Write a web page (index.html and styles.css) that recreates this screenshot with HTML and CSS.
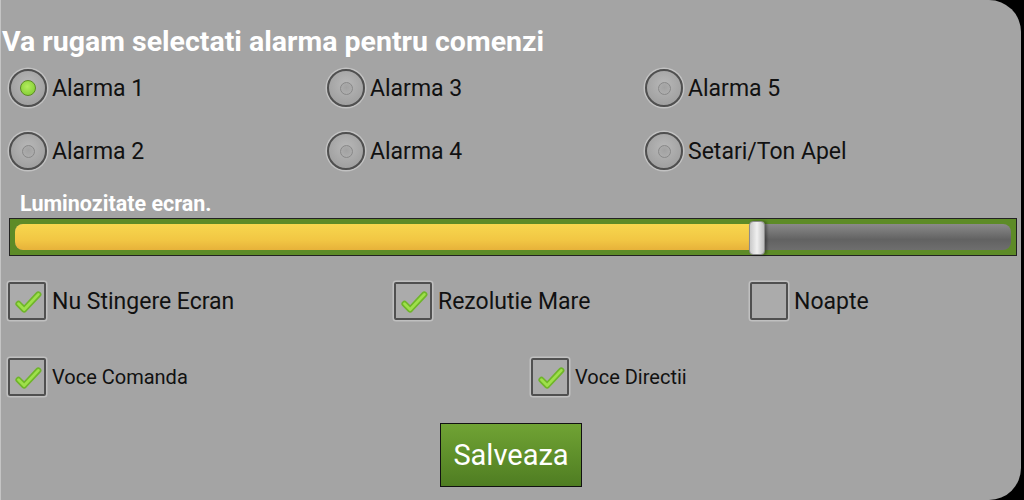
FILE: index.html
```html
<!DOCTYPE html>
<html>
<head>
<meta charset="utf-8">
<link rel="stylesheet" href="styles.css">
</head>
<body>
<div class="panel">
  <h1 class="title">Va rugam selectati alarma pentru comenzi</h1>
  <div class="radios">
    <div class="opt"><span class="radio on"><span class="dot"></span></span><span class="lbl">Alarma 1</span></div>
    <div class="opt"><span class="radio"><span class="dot"></span></span><span class="lbl">Alarma 3</span></div>
    <div class="opt"><span class="radio"><span class="dot"></span></span><span class="lbl">Alarma 5</span></div>
    <div class="opt"><span class="radio"><span class="dot"></span></span><span class="lbl">Alarma 2</span></div>
    <div class="opt"><span class="radio"><span class="dot"></span></span><span class="lbl">Alarma 4</span></div>
    <div class="opt"><span class="radio"><span class="dot"></span></span><span class="lbl">Setari/Ton Apel</span></div>
  </div>
  <div class="bright">Luminozitate ecran.</div>
  <div class="slider">
    <div class="track">
      <div class="fill" style="width:736px"></div>
      <div class="thumb"></div>
    </div>
  </div>
  <div class="checks row1">
    <div class="chk"><span class="box"><svg viewBox="0 0 36 36" width="36" height="36"><path d="M9 21 L15 27 L30 11" fill="none" stroke="#6fb52a" stroke-width="6.5" stroke-linecap="round" stroke-linejoin="round"/><path d="M9 21 L15 27 L30 11" fill="none" stroke="#9ee04a" stroke-width="3" stroke-linecap="round" stroke-linejoin="round"/></svg></span><span class="clbl">Nu Stingere Ecran</span></div>
    <div class="chk"><span class="box"><svg viewBox="0 0 36 36" width="36" height="36"><path d="M9 21 L15 27 L30 11" fill="none" stroke="#6fb52a" stroke-width="6.5" stroke-linecap="round" stroke-linejoin="round"/><path d="M9 21 L15 27 L30 11" fill="none" stroke="#9ee04a" stroke-width="3" stroke-linecap="round" stroke-linejoin="round"/></svg></span><span class="clbl">Rezolutie Mare</span></div>
    <div class="chk"><span class="box"></span><span class="clbl">Noapte</span></div>
  </div>
  <div class="checks row2">
    <div class="chk"><span class="box"><svg viewBox="0 0 36 36" width="36" height="36"><path d="M9 21 L15 27 L30 11" fill="none" stroke="#6fb52a" stroke-width="6.5" stroke-linecap="round" stroke-linejoin="round"/><path d="M9 21 L15 27 L30 11" fill="none" stroke="#9ee04a" stroke-width="3" stroke-linecap="round" stroke-linejoin="round"/></svg></span><span class="clbl small">Voce Comanda</span></div>
    <div class="chk"><span class="box"><svg viewBox="0 0 36 36" width="36" height="36"><path d="M9 21 L15 27 L30 11" fill="none" stroke="#6fb52a" stroke-width="6.5" stroke-linecap="round" stroke-linejoin="round"/><path d="M9 21 L15 27 L30 11" fill="none" stroke="#9ee04a" stroke-width="3" stroke-linecap="round" stroke-linejoin="round"/></svg></span><span class="clbl small">Voce Directii</span></div>
  </div>
  <div class="btnrow"><button class="save">Salveaza</button></div>
</div>
</body>
</html>
```
FILE: styles.css
```css
html, body {
  margin: 0;
  padding: 0;
  background: #000;
}
body {
  width: 1024px;
  height: 500px;
  overflow: hidden;
  font-family: Roboto, "Liberation Sans", sans-serif;
}
.panel {
  width: 1021px;
  height: 500px;
  box-sizing: border-box;
  background: #a4a4a4;
  border-radius: 0 32px 32px 0;
  border-left: 1px solid #c4c4c4;
  display: flex;
  flex-direction: column;
}
.title {
  margin: 25px 0 0 1px;
  font-size: 28.5px;
  line-height: 34px;
  font-weight: 700;
  color: #fff;
  white-space: nowrap;
}
.radios {
  display: grid;
  grid-template-columns: 318px 318px 318px;
  grid-auto-rows: 63px;
  margin: 9px 0 0 7px;
}
.opt {
  display: flex;
  align-items: center;
  gap: 5px;
  height: 40px;
}
.radio {
  width: 34px;
  height: 34px;
  border-radius: 50%;
  border: 2px solid #4f4f4f;
  box-shadow: 0 0 0 1.5px #c2c2c2;
  background: radial-gradient(circle at 50% 40%, #b8b8b8, #a2a2a2 70%);
  display: flex;
  align-items: center;
  justify-content: center;
  box-sizing: content-box;
  margin-left: 1px;
}
.radio .dot {
  width: 11px;
  height: 11px;
  border-radius: 50%;
  border: 1px solid #888;
  background: radial-gradient(circle at 50% 40%, #a2a2a2, #b0b0b0);
}
.radio.on .dot {
  width: 14px;
  height: 14px;
  border: 1px solid #5c8a23;
  background: radial-gradient(circle at 45% 40%, #b4ec5e, #8ad23a 70%);
}
.lbl {
  font-size: 23px;
  color: #111;
  white-space: nowrap;
}
.bright {
  margin: 0 0 0 19px;
  font-size: 21.5px;
  line-height: 20px;
  font-weight: 700;
  color: #fff;
}
.slider {
  margin: 4px 0 0 8px;
  width: 1008px;
  height: 38px;
  box-sizing: border-box;
  border: 1px solid #222;
  background: #5d8b27;
  padding: 5px;
}
.track {
  position: relative;
  height: 26px;
  border-radius: 8px;
  background: linear-gradient(#8a8a8a, #626262 60%, #6e6e6e);
}
.fill {
  height: 26px;
  border-radius: 8px 0 0 8px;
  background: linear-gradient(#f7d74e, #f2c744 60%, #e7b23a);
}
.thumb {
  position: absolute;
  left: 734px;
  top: -3px;
  width: 16px;
  height: 34px;
  border-radius: 4px;
  background: linear-gradient(90deg, #c9c9c9, #f0f0f0 50%, #bdbdbd);
  border: 1px solid #8c8c8c;
  box-sizing: border-box;
  box-shadow: 2px 0 3px rgba(0,0,0,0.35);
}
.checks {
  display: grid;
  align-items: center;
  margin-left: 7px;
}
.row1 {
  grid-template-columns: 386px 356px auto;
  margin-top: 26px;
}
.row2 {
  grid-template-columns: 523px auto;
  margin-top: 38px;
}
.chk {
  display: flex;
  align-items: center;
  gap: 6px;
}
.box {
  width: 34px;
  height: 34px;
  border: 2px solid #505050;
  box-shadow: 0 0 0 1.5px #c0c0c0;
  background: #ababab;
  border-radius: 2px;
  display: flex;
  box-sizing: content-box;
  flex: none;
}
.box svg {
  width: 34px;
  height: 34px;
}
.clbl {
  font-size: 23px;
  color: #111;
  white-space: nowrap;
}
.clbl.small {
  font-size: 20px;
}
.btnrow {
  display: flex;
  justify-content: center;
  margin-top: 27px;
}
.save {
  width: 142px;
  height: 64px;
  border: 1px solid #111;
  background: linear-gradient(#70a334, #4f7d22);
  color: #fff;
  font-family: Roboto, "Liberation Sans", sans-serif;
  font-size: 29px;
  padding: 0;
}
```
